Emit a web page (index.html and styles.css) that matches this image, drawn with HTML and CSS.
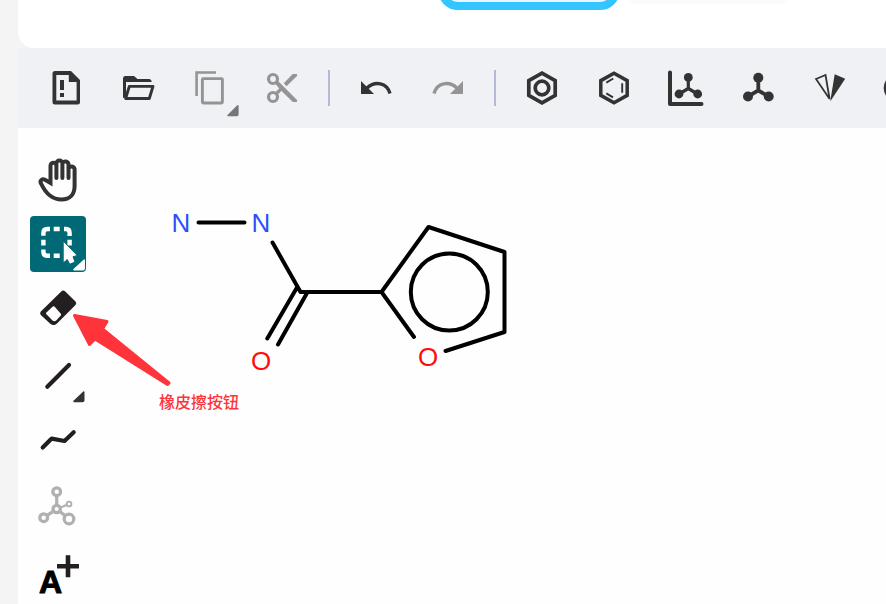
FILE: index.html
```html
<!DOCTYPE html>
<html lang="zh-CN">
<head>
<meta charset="utf-8">
<meta name="viewport" content="width=device-width, initial-scale=1">
<title>Molecule editor</title>
<link rel="stylesheet" href="styles.css">
</head>
<body>
<div class="app">
  <header class="header">
    <button class="tab tab-active" type="button" aria-label="Current tab"></button>
    <button class="tab" type="button" aria-label="Other tab"></button>
  </header>

  <nav class="toolbar" aria-label="Toolbar">
    <button class="tool" type="button" aria-label="New">
      <svg class="icon" viewBox="0 0 40 40"><path fill="currentColor" fill-rule="evenodd" d="M9 3H25L34 12V34Q34 36.500 31.500 36.500H9Q6.500 36.500 6.500 34V5.500Q6.500 3 9 3ZM10.300 7V32.600H30.600V14H22.800V7ZM14 12h4v10h-4ZM14 25h4v4h-4Z"/></svg>
    </button>
    <button class="tool" type="button" aria-label="Open">
      <svg class="icon" viewBox="0 0 40 40"><path fill="currentColor" d="M7.500 8H16L19.500 11H31.500Q33.700 11.500 33.700 14H8V29L5 30V10.500Q5 8 7.500 8Z"/><path class="line" stroke-width="2.900" stroke-linejoin="round" d="M11.300 18.400H35L31.300 30.500H7.600ZM6.500 12V29"/></svg>
    </button>
    <button class="tool tool-muted" type="button" aria-label="Copy">
      <svg class="icon" viewBox="0 0 40 40"><path class="line" stroke-width="2.600" d="M6.600 28V4.500H26"/><rect class="line" stroke-width="2.900" x="12.400" y="10.600" width="20" height="24.400" rx="1"/><path fill="#777" d="M47.500 37Q48.600 37 48.600 38V46.500Q48.600 48.200 47 48.200H38Q36.600 48 37.500 47Z"/></svg>
    </button>
    <button class="tool tool-muted" type="button" aria-label="Cut">
      <svg class="icon" viewBox="0 0 40 40"><g class="line" stroke-width="3.200"><circle cx="11" cy="11" r="4.500"/><circle cx="11" cy="29" r="4.500"/><path d="M14 26 20 20"/></g><path fill="currentColor" d="M13 15.500 15.800 12.800 35 32V34H30.800L19 22.500ZM21.800 15.200 30.700 6H35V8L24.500 18.300Z"/></svg>
    </button>
    <span class="separator"></span>
    <button class="tool" type="button" aria-label="Undo">
      <svg class="icon" viewBox="0 0 40 40"><path fill="currentColor" d="M5 13V26H18Z"/><path class="line" stroke-width="3.400" d="M11 20C19 12.500 31 14.500 34 25.500"/></svg>
    </button>
    <button class="tool tool-muted" type="button" aria-label="Redo">
      <svg class="icon" viewBox="0 0 40 40"><path fill="currentColor" d="M35 13V26H22Z"/><path class="line" stroke-width="3.400" d="M29 20C21 12.500 9 14.500 6 25.500"/></svg>
    </button>
    <span class="separator"></span>
    <button class="tool" type="button" aria-label="Aromatize">
      <svg class="icon" viewBox="0 0 40 40"><g class="line" stroke-width="3.700"><path d="M20 5.200 33.200 12.600V27.400L20 34.800 6.800 27.400V12.600Z"/><circle cx="20" cy="20" r="6.800"/></g></svg>
    </button>
    <button class="tool" type="button" aria-label="Dearomatize">
      <svg class="icon" viewBox="0 0 40 40"><g class="line"><path stroke-width="3.500" d="M20 5.200 33.200 12.600V27.400L20 34.800 6.800 27.400V12.600Z"/><path stroke-width="1.900" d="M12.300 14.600 19.300 10.500M28.200 15.300V24.700M12.300 25.400 19 29.400"/></g></svg>
    </button>
    <button class="tool" type="button" aria-label="Layout">
      <svg class="icon" viewBox="0 0 40 40"><g class="line" stroke-linecap="round"><path stroke-width="4" stroke-linejoin="round" d="M4 4.500V36H35.500"/><path stroke-width="3.200" d="M22.300 9V20.500L13 26M22.300 20.500 31.700 26"/></g><g fill="currentColor"><circle cx="22.300" cy="9.400" r="4.400"/><circle cx="13" cy="26" r="4.400"/><circle cx="31.700" cy="26" r="4.400"/></g></svg>
    </button>
    <button class="tool" type="button" aria-label="Clean up">
      <svg class="icon" viewBox="0 0 40 40"><path class="line" stroke-width="3.800" d="M20.300 10V22.500L10 28.500M20.300 22.500 30.700 28.500"/><g fill="currentColor"><circle cx="20.300" cy="9.700" r="5"/><circle cx="10" cy="28.500" r="5"/><circle cx="30.700" cy="28.500" r="5"/></g></svg>
    </button>
    <button class="tool" type="button" aria-label="Calculate CIP">
      <svg class="icon" viewBox="0 0 40 40"><path class="line" stroke-width="1.800" d="M6 11 15.500 7 19.600 31Z"/><path fill="currentColor" d="M24.700 6.300 35.200 10.800 20.200 33.500Z"/></svg>
    </button>
    <button class="tool" type="button" aria-label="Check structure">
      <svg class="icon" viewBox="0 0 40 40"><circle class="line" stroke-width="3.600" cx="16" cy="20" r="12.500"/></svg>
    </button>
  </nav>

  <main class="workspace">
    <aside class="sidebar" aria-label="Drawing tools">
      <div class="group">
        <button class="side-tool" type="button" aria-label="Hand">
          <svg class="side-icon" viewBox="0 0 56 56"><path class="line" stroke-width="4" stroke-linecap="round" d="M26.400 26V13.500a2.950 2.950 0 0 0-5.900.500V31L15.500 28C12 26.300 9.500 28.500 11 31.500 15 40 21 47.500 31.500 47.500 40 47.500 44.600 42.500 44.600 34V18a3 3 0 0 0-6-1M26.400 14V11.500a3 3 0 0 1 6 0V26M32.400 12a3 3 0 0 1 6.100 1V26"/></svg>
        </button>
        <button class="side-tool side-tool-active" type="button" aria-label="Rectangle selection" aria-pressed="true">
          <svg class="side-icon" viewBox="0 0 56 56"><path class="line" stroke-width="4.400" d="M13.400 19.700V17Q13.400 13 17.400 13H20M23.700 13H29.700M34 13H36Q39.600 13 39.600 17V20M13.400 23.700V29.500M13.400 33.500V36Q13.400 39.800 17.400 39.800H20M23.700 39.800H29.700M39.600 23.700V29.500"/><path fill="currentColor" stroke="#006975" stroke-width="1" d="M33.200 25 47.300 39.500 43 40.700 45 46 39.700 48.300 37.300 43.500 33.200 47Z"/><path fill="currentColor" d="M54 43.200Q55 43.200 55 44.500V52.500Q54.800 54.500 53 54.500H44Q42.600 54.200 43.500 53Z"/></svg>
        </button>
        <button class="side-tool" type="button" aria-label="Erase">
          <svg class="side-icon" viewBox="0 0 56 56"><path fill="#231f20" fill-rule="evenodd" d="M31.500 11.200Q33.300 9.600 35 11.200L45.500 21.600Q47 23.400 45.500 25L27 43.500Q23.500 46.500 20 43.500L10.800 35Q9.300 33.300 10.800 31.600ZM22.800 26.500 16.200 32.700Q15.600 33.400 16.200 34L22.500 40.500Q24.400 42 26.200 40.500L30.800 35.500Q31.500 34.600 30.800 33.800L24.500 26.600Q23.600 25.900 22.800 26.500Z"/></svg>
        </button>
      </div>
      <div class="group">
        <button class="side-tool" type="button" aria-label="Single bond">
          <svg class="side-icon" viewBox="0 0 56 56"><path stroke="#231f20" stroke-width="4.200" stroke-linecap="round" d="M17.300 38.700 39 17"/><path fill="currentColor" d="M53.500 43.200Q54.500 43 54.500 44.500V52.500Q54.300 54.200 52.500 54.200H44Q42.600 54 43.500 52.700Z"/></svg>
        </button>
        <button class="side-tool" type="button" aria-label="Chain">
          <svg class="side-icon" viewBox="0 0 56 56"><path fill="none" stroke="#231f20" stroke-width="4.200" stroke-linecap="round" stroke-linejoin="round" d="M12.700 35.500 21.700 26.600 34.500 29 43.700 20.300"/></svg>
        </button>
        <button class="side-tool side-tool-disabled" type="button" aria-label="Stereochemistry" disabled>
          <svg class="side-icon" viewBox="0 0 56 56"><g class="line" stroke-width="3.200"><circle cx="26.700" cy="15.700" r="3.900"/><circle cx="26.700" cy="33" r="3.700"/><circle cx="13.700" cy="41.700" r="3.900"/><circle cx="39" cy="43" r="4.800"/><circle cx="39" cy="28" r="2.400" stroke-width="1.900"/><path d="M26.700 20V29M23.200 35.300 17.200 39.300M29.800 35.500 35.200 39.800"/><path stroke-width="2" d="M30.500 31.500 36.500 29"/></g></svg>
        </button>
      </div>
      <div class="group">
        <button class="side-tool" type="button" aria-label="Charge plus">
          <svg class="side-icon" viewBox="0 0 56 56"><text class="charge-letter" x="20.500" y="49" text-anchor="middle">A</text><path stroke="#231f20" stroke-width="4.600" d="M27 22.200H49M38 11.200V33.200"/></svg>
        </button>
      </div>
    </aside>

    <section class="canvas" aria-label="Canvas">
      <svg class="drawing">
        <g transform="translate(-98 -128)">
          <g class="bonds">
            <path d="M198.500 222.500H244.500M272.500 242.500 300.500 292H381.500M296.700 288 267.300 338.500M307 293 278 344.500"/>
            <path d="M414 337 381.500 292 428.500 227 504.500 252V332L445.500 351"/>
            <circle cx="449.300" cy="292" r="38.500"/>
          </g>
          <g class="atoms">
            <text class="nitrogen" x="181" y="232">N</text>
            <text class="nitrogen" x="261" y="232">N</text>
            <text class="oxygen" x="261" y="370">O</text>
            <text class="oxygen" x="428" y="366">O</text>
          </g>
          <path class="arrow" d="M74.500 315.500 107 321.500 102.500 329 169 383 167.500 384.500 95 339 89.500 344.500Z"/>
          <text class="note" x="159" y="408">橡皮擦按钮</text>
        </g>
      </svg>
    </section>
  </main>
</div>

<svg class="watermark" aria-hidden="true">
  <text transform="translate(-413 466) rotate(-29)">web-test-test3_23-12-20 15:56:51</text>
  <text transform="translate(-231 383) rotate(-29)">web-test-test3_23-12-20 15:56:51</text>
  <text transform="translate(105 175) rotate(-29)">web-test-test3_23-12-20 15:56:51</text>
  <text transform="translate(287 92) rotate(-29)">web-test-test3_23-12-20 15:56:51</text>
  <text transform="translate(-261 806) rotate(-29)">web-test-test3_23-12-20 15:56:51</text>
  <text transform="translate(75 600) rotate(-29)">web-test-test3_23-12-20 15:56:51</text>
  <text transform="translate(260 517) rotate(-29)">web-test-test3_23-12-20 15:56:51</text>
  <text transform="translate(595 309) rotate(-29)">web-test-test3_23-12-20 15:56:51</text>
  <text transform="translate(784 228) rotate(-29)">web-test-test3_23-12-20 15:56:51</text>
  <text transform="translate(562 732) rotate(-29)">web-test-test3_23-12-20 15:56:51</text>
  <text transform="translate(744 648) rotate(-29)">web-test-test3_23-12-20 15:56:51</text>
</svg>
</body>
</html>
```
FILE: styles.css
```css
* {
  box-sizing: border-box;
}

body {
  margin: 0;
  overflow: hidden;
  background: #f4f4f4;
  color: #333;
  font-family: "Liberation Sans", "Noto Sans CJK SC", sans-serif;
}

button {
  padding: 0;
  border: 0;
  background: none;
  color: inherit;
  font: inherit;
}

.app {
  display: flex;
  flex-direction: column;
  min-height: 100vh;
  margin-left: 18px;
}

.header {
  display: flex;
  align-items: flex-start;
  gap: 5px;
  height: 48px;
  padding-left: 420px;
  overflow: hidden;
  border-bottom-left-radius: 16px;
  background: #fff;
}

.tab {
  width: 166px;
  height: 60px;
  margin-top: -56px;
  border-radius: 12px;
  background: #fafafa;
}

.tab-active {
  width: 182px;
  margin-top: -50px;
  border: 8px solid #33c5ff;
  border-radius: 20px;
  background: #e9f6ff;
}

.toolbar {
  display: flex;
  align-items: center;
  height: 80px;
  padding-left: 12px;
  overflow: hidden;
  background: #f0f1f5;
}

.tool {
  display: flex;
  flex: none;
  align-items: center;
  justify-content: center;
  width: 72px;
  height: 80px;
}

.tool-muted {
  color: #949494;
}

.icon {
  width: 40px;
  height: 40px;
  overflow: visible;
}

.line {
  fill: none;
  stroke: currentColor;
}

.separator {
  flex: none;
  width: 2px;
  height: 36px;
  margin: 0 10px;
  background: #b4b9d6;
}

.workspace {
  display: flex;
  flex: 1;
  background: #fefefe;
}

.sidebar {
  display: flex;
  flex: none;
  flex-direction: column;
  gap: 12px;
  width: 80px;
  padding: 24px 12px 0;
}

.group {
  display: flex;
  flex-direction: column;
  gap: 8px;
}

.side-tool {
  display: block;
  width: 56px;
  height: 56px;
  border-radius: 4px;
}

.side-tool-active {
  background: #006975;
  color: #fff;
}

.side-tool-disabled {
  color: #b0b0b0;
}

.side-icon {
  display: block;
  width: 56px;
  height: 56px;
}

.charge-letter {
  fill: #000;
  stroke: #000;
  stroke-width: 1px;
  stroke-linejoin: round;
  font-size: 32px;
  font-weight: 700;
}

.canvas {
  flex: 1;
}

.drawing {
  display: block;
  width: 100%;
  height: 100%;
  overflow: visible;
}

.bonds {
  fill: none;
  stroke: #000;
  stroke-width: 4px;
  stroke-linecap: round;
  stroke-linejoin: round;
}

.atoms {
  font-size: 26px;
  text-anchor: middle;
}

.nitrogen {
  fill: #304ff7;
}

.oxygen {
  fill: #ff0d0d;
}

.arrow {
  fill: #ff343a;
  stroke: #ff343a;
  stroke-width: 3px;
  stroke-linejoin: round;
}

.note {
  fill: #ff343a;
  font-family: "Noto Sans CJK SC", sans-serif;
  font-size: 16px;
  font-weight: 500;
}

.watermark {
  position: absolute;
  inset: 0;
  width: 100%;
  height: 100%;
  fill: rgba(0, 0, 0, 0.02);
  font-size: 34px;
  pointer-events: none;
}
```
